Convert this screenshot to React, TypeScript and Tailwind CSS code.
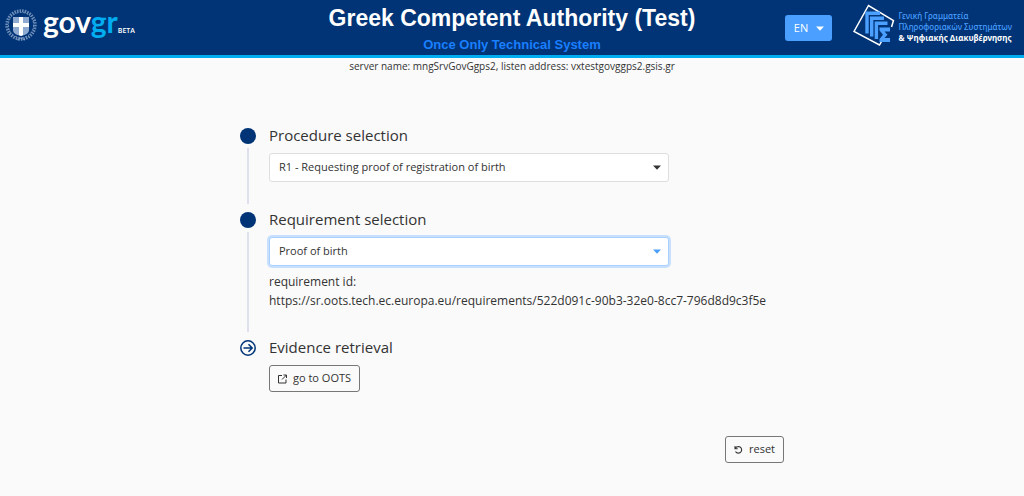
import { useState } from "react";
import type { ReactNode } from "react";
import clsx from "clsx";

const requirementUrl =
  "https://sr.oots.tech.ec.europa.eu/requirements/522d091c-90b3-32e0-8cc7-796d8d9c3f5e";

function Emblem() {
  return (
    <svg viewBox="0 0 34 34" className="size-[34px] shrink-0" aria-hidden="true">
      <g fill="none" stroke="#9db5d6">
        <circle cx="17" cy="17" r="14.2" strokeWidth="3" strokeDasharray="1.5 1.1" opacity="0.7" />
        <circle cx="17" cy="17" r="12.6" strokeWidth="1" strokeDasharray="2 1.4" opacity="0.7" />
        <path d="M13 32l4-2 4 2" strokeWidth="1" opacity="0.7" />
      </g>
      <path d="M9 9h16v13c0 3-3 5-8 6-5-1-8-3-8-6z" fill="#8eaad0" />
      <path d="M15 9h4v6h6v4h-6v8l-2 1-2-1v-8H9v-4h6z" fill="#fff" />
    </svg>
  );
}

function AgencyMark() {
  return (
    <svg viewBox="0 0 42 42" className="size-[42px] shrink-0" aria-hidden="true">
      <path d="M38.500 23L40.500 16.500 15.500 1.500 1 27.500 26.500 41l2-3.500" fill="none" stroke="#fff" strokeWidth="1.500" />
      <g fill="none" stroke="#4a9fff" strokeWidth="3.400">
        <path d="M14 29.500V9.200H27" />
        <path d="M18.700 32.500V14.200H31" />
        <path d="M23.400 35V19.200H34.500" />
      </g>
      <path d="M26.500 23.500H37v4h-5.500l3 3.300-3 3.200H37v4H26.500v-3l3.500-4.200-3.500-4.300z" fill="#4a9fff" />
    </svg>
  );
}

function Caret({ className }: { className?: string }) {
  return (
    <svg viewBox="0 0 8 5" className={clsx("h-[5px] w-2", className)} aria-hidden="true">
      <path d="M0 0.500h8L4 4.800z" fill="currentColor" />
    </svg>
  );
}

function Header() {
  return (
    <header className="grid h-[58px] grid-cols-[1fr_auto_1fr] border-b-[3px] border-[#00adf0] bg-[#003476]">
      <a href="#" className="flex items-start pt-2 pl-1" aria-label="govgr beta">
        <Emblem />
        <span className="ml-[5px] flex items-baseline font-['Lato',sans-serif] font-bold text-white">
          <span className="text-[30px] leading-[26px]">
            gov<span className="text-[#00adf0]">gr</span>
          </span>
          <span className="font-['Open_Sans',sans-serif] text-[7px] font-semibold">BETA</span>
        </span>
      </a>

      <div className="pt-1 text-center font-['Liberation_Sans',Arial,sans-serif] font-bold">
        <h1 className="text-[23px] leading-7 text-white">Greek Competent Authority (Test)</h1>
        <p className="mt-[5px] text-[13px] leading-4 text-[#1a7fff]">Once Only Technical System</p>
      </div>

      <div className="flex items-start justify-end gap-[21px] pr-3">
        <button
          type="button"
          className="mt-[15px] flex h-[26px] w-[47px] items-center justify-center gap-2 rounded-[3px] bg-[#4a9fff] text-[11px] text-white"
        >
          EN
          <Caret />
        </button>
        <div className="flex gap-[3px] pt-1">
          <AgencyMark />
          <p className="pt-[6px] font-['Noto_Sans',sans-serif] text-[8px] leading-[11px] font-medium whitespace-nowrap text-[#4a9fff]">
            Γενική Γραμματεία
            <br />
            Πληροφοριακών Συστημάτων
            <br />
            <span className="font-bold text-white">&amp; Ψηφιακής Διακυβέρνησης</span>
          </p>
        </div>
      </div>
    </header>
  );
}

function DoneDot() {
  return <span className="size-4 rounded-full bg-[#003476]" />;
}

function ArrowDot() {
  return (
    <svg viewBox="0 0 16 16" className="size-4" fill="none" stroke="#003476" strokeWidth="1.500" aria-hidden="true">
      <circle cx="8" cy="8" r="7.200" />
      <path d="M3.500 8h8.500M8.500 4.300L12.200 8l-3.700 3.700" />
    </svg>
  );
}

type StepProps = {
  title: ReactNode;
  marker: ReactNode;
  last?: boolean;
  children: ReactNode;
};

function Step({ title, marker, last, children }: StepProps) {
  return (
    <li className="flex gap-[13px]">
      <div className="flex flex-col items-center">
        {marker}
        {!last && <span className="mt-1 mb-2 w-0.5 flex-1 bg-[#dfe1ea]" />}
      </div>
      <div className={clsx("min-w-0 flex-1", !last && "pb-[30px]")}>
        <h2 className="mb-[10px] text-[15px] leading-[15px]">{title}</h2>
        {children}
      </div>
    </li>
  );
}

type SelectBoxProps = { id: string; options: string[]; active?: boolean };

function SelectBox({ id, options, active }: SelectBoxProps) {
  return (
    <div className="relative max-w-[400px]">
      <select
        id={id}
        className={clsx(
          "block h-[29px] w-full appearance-none rounded-[3px] border bg-white px-[9px] text-[11px] outline-none",
          active ? "border-[#a9d0ff] ring-2 ring-[#c8e0fc]" : "border-[#dedede]",
        )}
      >
        {options.map((option) => (
          <option key={option}>{option}</option>
        ))}
      </select>
      <Caret
        className={clsx(
          "pointer-events-none absolute top-3 right-2",
          active ? "text-[#4a9fff]" : "text-[#333]",
        )}
      />
    </div>
  );
}

type OutlineButtonProps = { icon: ReactNode; children: ReactNode; onClick?: () => void };

function OutlineButton({ icon, children, onClick }: OutlineButtonProps) {
  return (
    <button
      type="button"
      onClick={onClick}
      className="flex h-[27px] items-center gap-[5px] rounded-[3px] border border-[#777] px-2 text-[11px]"
    >
      {icon}
      {children}
    </button>
  );
}

function ExternalIcon() {
  return (
    <svg viewBox="0 0 10 10" className="size-[10px]" fill="none" stroke="currentColor" aria-hidden="true">
      <path d="M4 1.500H0.500v7.500h7.500V5.500M5.500 1h3v3M8.500 1L4 5.500" />
    </svg>
  );
}

function ResetIcon() {
  return (
    <svg viewBox="0 0 10 10" className="size-[10px]" fill="none" stroke="currentColor" strokeWidth="1.100" aria-hidden="true">
      <path d="M1 1v2.700h2.700M1.200 3.500C2 2 3.200 1.500 4.500 1.500a3.300 3.300 0 1 1-3 4.900" />
    </svg>
  );
}

export default function App() {
  const [formKey, setFormKey] = useState(0);

  return (
    <div className="min-h-screen bg-[#fafafa] font-['Open_Sans',sans-serif] text-[#333]">
      <Header />
      <p className="text-center text-[10px] leading-4">
        server name: mngSrvGovGgps2, listen address: vxtestgovggps2.gsis.gr
      </p>

      <main className="mx-auto mt-[54px] max-w-[544px]">
        <ol key={formKey}>
          <Step title={<label htmlFor="procedure">Procedure selection</label>} marker={<DoneDot />}>
            <SelectBox id="procedure" options={["R1 - Requesting proof of registration of birth"]} />
          </Step>
          <Step title={<label htmlFor="requirement">Requirement selection</label>} marker={<DoneDot />}>
            <SelectBox id="requirement" options={["Proof of birth"]} active />
            <p className="mt-[6px] text-[12px] leading-[19px]">
              requirement id:
              <br />
              <span className="whitespace-nowrap">{requirementUrl}</span>
            </p>
          </Step>
          <Step title="Evidence retrieval" marker={<ArrowDot />} last>
            <OutlineButton icon={<ExternalIcon />}>go to OOTS</OutlineButton>
          </Step>
        </ol>
        <div className="mt-11 flex justify-end">
          <OutlineButton icon={<ResetIcon />} onClick={() => setFormKey(formKey + 1)}>
            reset
          </OutlineButton>
        </div>
      </main>
    </div>
  );
}
